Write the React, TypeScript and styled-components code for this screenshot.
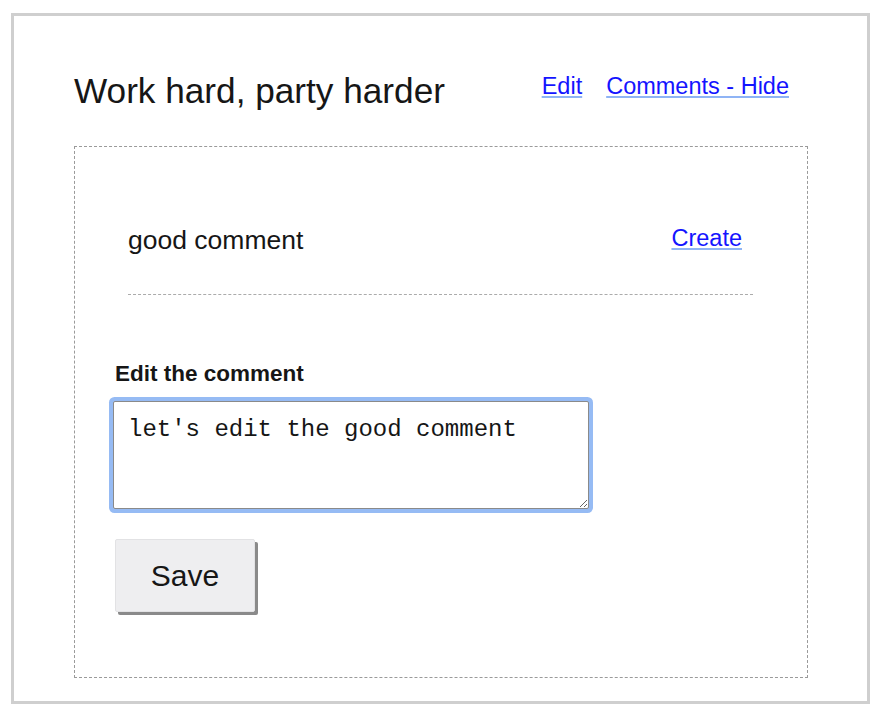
import { useEffect, useRef } from "react";
import styled, { createGlobalStyle } from "styled-components";

const GlobalStyle = createGlobalStyle`
  html, body {
    margin: 0;
    padding: 0;
    background: #ffffff;
  }
  body {
    font-family: "Liberation Sans", Helvetica, Arial, sans-serif;
    color: #161616;
  }
`;

const Card = styled.div`
  box-sizing: border-box;
  margin: 13px 10px 0 11px;
  height: 691px;
  border: 3px solid #cfcfcf;
  padding: 55px 59px 0 60px;
`;

const Header = styled.div`
  display: flex;
  align-items: flex-start;
  justify-content: space-between;
  padding-right: 19px;
  margin-bottom: 35px;
`;

const Title = styled.h2`
  margin: 0;
  font-size: 35.2px;
  font-weight: 400;
  line-height: 40px;
  color: #161616;
`;

const Actions = styled.div`
  display: flex;
  gap: 24px;
  padding-top: 2px;
`;

const Link = styled.a`
  font-size: 23.5px;
  line-height: 27px;
  color: #1414ff;
  text-decoration: underline;
  text-decoration-color: #8fb4f5;
  text-underline-offset: 2px;
  cursor: pointer;
`;

const CommentsBox = styled.div`
  box-sizing: border-box;
  height: 532px;
  border: 1px dashed #9a9a9a;
  padding: 78px 54px 0 38px;
`;

const CommentItem = styled.div`
  display: flex;
  align-items: flex-start;
  justify-content: space-between;
  margin-left: 15px;
  padding: 0 11px 39px 0;
  border-bottom: 1px dashed #ababab;
`;

const CommentText = styled.div`
  font-size: 26.5px;
  line-height: 30px;
  color: #161616;
`;

const EditForm = styled.form`
  display: flex;
  flex-direction: column;
  align-items: flex-start;
  padding-top: 66px;
`;

const Label = styled.label`
  font-size: 22.5px;
  font-weight: 700;
  line-height: 25px;
  color: #161616;
  margin-left: 2px;
  margin-bottom: 15px;
`;

const TextArea = styled.textarea`
  box-sizing: border-box;
  display: block;
  width: 476px;
  height: 108px;
  margin: 0;
  padding: 14px;
  border: 1px solid #8a8a8a;
  border-radius: 2px;
  box-shadow: 0 0 0 4px #96bbf4;
  outline: none;
  font-family: "Liberation Mono", "Courier New", monospace;
  font-size: 24px;
  line-height: 28.8px;
  color: #161616;
  background: #ffffff;
  &:focus {
    outline: none;
  }
`;

const SaveButton = styled.button`
  margin: 30px 0 0 2px;
  width: 140px;
  height: 73px;
  border: 1px solid #e2e2e4;
  border-radius: 2px;
  background: #eeeef0;
  box-shadow: 3px 3px 0 #8a8a8a;
  font-family: "Liberation Sans", Helvetica, Arial, sans-serif;
  font-size: 30px;
  color: #161616;
  cursor: pointer;
`;

export default function App() {
  const areaRef = useRef<HTMLTextAreaElement>(null);

  useEffect(() => {
    const el = areaRef.current;
    if (el) {
      el.focus();
      el.setSelectionRange(15, 15);
    }
  }, []);

  return (
    <>
      <GlobalStyle />
      <Card>
        <Header>
          <Title>Work hard, party harder</Title>
          <Actions>
            <Link>Edit</Link>
            <Link>Comments - Hide</Link>
          </Actions>
        </Header>
        <CommentsBox>
          <CommentItem>
            <CommentText>good comment</CommentText>
            <Link>Create</Link>
          </CommentItem>
          <EditForm onSubmit={(e) => e.preventDefault()}>
            <Label htmlFor="comment">Edit the comment</Label>
            <TextArea
              id="comment"
              ref={areaRef}
              defaultValue="let's edit the good comment"
            />
            <SaveButton type="submit">Save</SaveButton>
          </EditForm>
        </CommentsBox>
      </Card>
    </>
  );
}
